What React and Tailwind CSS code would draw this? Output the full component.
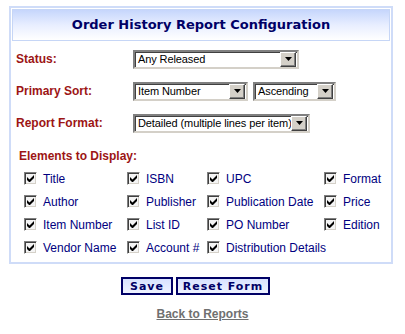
import React from "react";

const elements = [
  ["Title", "ISBN", "UPC", "Format"],
  ["Author", "Publisher", "Publication Date", "Price"],
  ["Item Number", "List ID", "PO Number", "Edition"],
  ["Vendor Name", "Account #", "Distribution Details", null],
];

function Select({ value, width }) {
  return (
    <div
      className={`flex h-[19px] items-center border-2 border-t-[#808080] border-l-[#808080] border-r-[#d4d0c8] border-b-[#d4d0c8] bg-white shadow-[inset_1px_1px_0_#404040] ${width}`}
    >
      <span className="min-w-0 flex-1 overflow-hidden whitespace-nowrap pl-[3px] pt-[1px] text-[11px] leading-none tracking-[-0.1px] text-black">
        {value}
      </span>
      <span className="mr-[1px] flex h-[15px] w-[16px] shrink-0 items-center justify-center border border-t-[#ffffff] border-l-[#ffffff] border-r-[#404040] border-b-[#404040] bg-[#d4d0c8] shadow-[inset_-1px_-1px_0_#808080]">
        <svg width="7" height="4" viewBox="0 0 7 4">
          <path d="M0 0h7L3.5 4z" fill="#000" />
        </svg>
      </span>
    </div>
  );
}

function Checkbox() {
  return (
    <span className="flex h-[13px] w-[13px] shrink-0 items-center justify-center border border-t-[#808080] border-l-[#808080] border-r-[#ffffff] border-b-[#ffffff] bg-[#f4f4f4] shadow-[inset_1px_1px_0_#404040,inset_-1px_-1px_0_#d4d0c8]">
      <svg width="7" height="7" viewBox="0 0 7 7">
        <path d="M0 2v3l2 2h1l4-4V0L2.5 4.5z" fill="#000" />
      </svg>
    </span>
  );
}

function Row({ label, children }) {
  return (
    <div className="flex h-[32px] items-center">
      <div className="w-[121px] pl-[4px] text-[12px] font-bold text-[#9c1515]">
        {label}
      </div>
      <div className="flex gap-[5px]">{children}</div>
    </div>
  );
}

export default function App() {
  return (
    <div
      className="h-[334px] w-[405px] bg-white pt-[6px]"
      style={{ fontFamily: '"Liberation Sans", Arial, sans-serif' }}
    >
      <div className="ml-[9px] w-[384px] border-2 border-[#cfdcf8] p-[1px] pb-[3px]">
        <div className="flex h-[32px] items-center justify-center border border-[#c6d6f6] bg-gradient-to-b from-[#c6d6fc] via-[#e8eeff] to-white">
          <h1
            className="text-[13px] font-bold text-[#000066]"
            style={{ fontFamily: '"DejaVu Sans", Verdana, sans-serif' }}
          >
            Order History Report Configuration
          </h1>
        </div>

        <div className="pt-[2px]">
          <Row label="Status:">
            <Select value="Any Released" width="w-[166px]" />
          </Row>
          <Row label="Primary Sort:">
            <Select value="Item Number" width="w-[115px]" />
            <Select value="Ascending" width="w-[83px]" />
          </Row>
          <Row label="Report Format:">
            <Select value="Detailed (multiple lines per item)" width="w-[177px]" />
          </Row>
        </div>

        <div className="mt-[8px] pl-[7px] text-[12px] leading-[18px] font-bold text-[#9c1515]">
          Elements to Display:
        </div>

        <div className="mt-[2px] grid grid-cols-[103px_80px_117px_1fr] pl-[12px]">
          {elements.flat().map((item, i) => (
            <div key={i} className="flex h-[23px] items-center gap-[6px]">
              {item && (
                <>
                  <Checkbox />
                  <span className="whitespace-nowrap text-[12px] text-[#000080]">
                    {item}
                  </span>
                </>
              )}
            </div>
          ))}
        </div>
      </div>

      <div className="mt-[13px] flex justify-center gap-[3px] pr-[14px]">
        <button
          type="button"
          className="h-[18px] w-[52px] border-2 border-[#000066] bg-gradient-to-b from-[#d8e2ff] to-[#eef2ff] text-[11px] font-bold leading-none tracking-[1px] text-[#000066]"
          style={{ fontFamily: '"DejaVu Sans", Verdana, sans-serif' }}
        >
          Save
        </button>
        <button
          type="button"
          className="h-[18px] w-[94px] border-2 border-[#000066] bg-gradient-to-b from-[#d8e2ff] to-[#eef2ff] text-[11px] font-bold leading-none tracking-[1px] text-[#000066]"
          style={{ fontFamily: '"DejaVu Sans", Verdana, sans-serif' }}
        >
          Reset Form
        </button>
      </div>

      <div className="mt-[9px] text-center leading-[18px]">
        <a href="#" className="text-[12px] font-bold text-[#707070] underline">
          Back to Reports
        </a>
      </div>
    </div>
  );
}
